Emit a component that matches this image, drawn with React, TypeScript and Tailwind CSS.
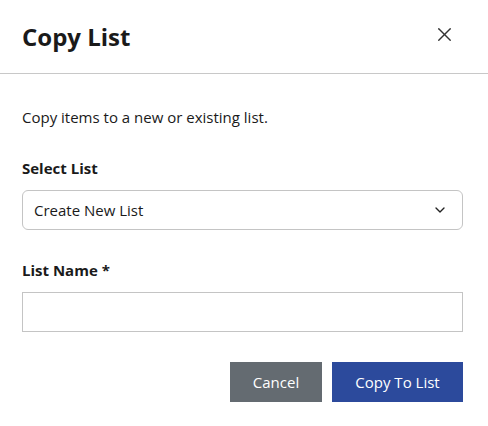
import { X, ChevronDown } from 'lucide-react'

export default function App() {
  return (
    <div className="w-[488px] h-[426px] bg-white text-[#1a1a1a]" style={{ fontFamily: '"Open Sans", sans-serif' }}>
      {/* Header */}
      <div className="h-[74px] flex items-center justify-between pl-[22px] pr-[32px] border-b border-[#c8c8c8]">
        <h2 className="text-[24px] font-bold leading-none">Copy List</h2>
        <X className="w-[23px] h-[23px] -mt-[5px] text-[#333]" strokeWidth={1.4} />
      </div>

      {/* Body */}
      <div className="pl-[22px] pr-[25px] pt-[33px]">
        <p className="text-[15px] leading-[20px]">Copy items to a new or existing list.</p>

        <label className="block mt-[31px] text-[15px] font-bold leading-[20px]">Select List</label>
        <div className="mt-[12px] h-[40px] border border-[#c4c4c4] rounded-[6px] flex items-center justify-between pl-[11px] pr-[14px]">
          <span className="text-[15px]">Create New List</span>
          <ChevronDown className="w-[16px] h-[16px] text-[#222]" strokeWidth={2} />
        </div>

        <label className="block mt-[30px] text-[15px] font-bold leading-[20px]">List Name *</label>
        <input
          type="text"
          className="block mt-[12px] w-full h-[40px] border border-[#c4c4c4] px-[11px] text-[15px] outline-none"
        />

        <div className="flex justify-end gap-[10px] mt-[30px]">
          <button className="w-[92px] h-[40px] bg-[#646b71] text-white text-[15px]">Cancel</button>
          <button className="w-[131px] h-[40px] bg-[#2c4a9c] text-white text-[15px]">Copy To List</button>
        </div>
      </div>
    </div>
  )
}
